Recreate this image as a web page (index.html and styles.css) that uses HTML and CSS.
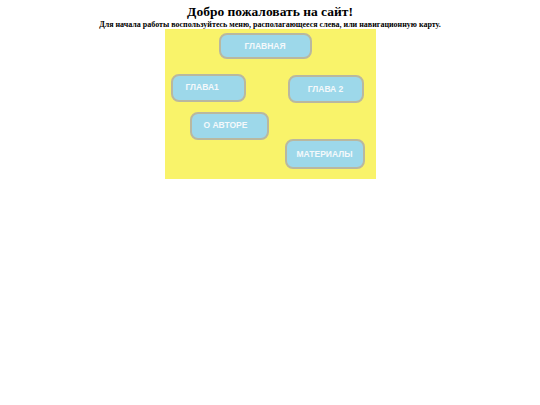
FILE: index.html
```html
<!DOCTYPE html>
<html lang="ru">
<head>
<meta charset="utf-8">
<title>Добро пожаловать</title>
<link rel="stylesheet" href="styles.css">
</head>
<body>
<h1 class="title">Добро пожаловать на сайт!</h1>
<p class="subtitle">Для начала работы воспользуйтесь меню, располагающееся слева, или навигационную карту.</p>
<div class="map">
  <a class="btn btn-main" href="#">ГЛАВНАЯ</a>
  <a class="btn btn-ch1" href="#">ГЛАВА1</a>
  <a class="btn btn-ch2" href="#">ГЛАВА 2</a>
  <a class="btn btn-author" href="#">О АВТОРЕ</a>
  <a class="btn btn-mat" href="#">МАТЕРИАЛЫ</a>
</div>
</body>
</html>
```
FILE: styles.css
```css
html, body {
  margin: 0;
  padding: 0;
  background: #ffffff;
}
body {
  font-family: "Liberation Serif", "Times New Roman", serif;
  color: #000;
  text-align: center;
  padding-top: 4px;
}
.title {
  font-size: 13.5px;
  font-weight: bold;
  line-height: 16px;
  margin: 0;
}
.subtitle {
  font-size: 8px;
  font-weight: bold;
  line-height: 9px;
  margin: 0;
}
.map {
  position: relative;
  width: 211px;
  height: 150px;
  margin: 0 auto;
  background: #f9f36a;
}
.btn {
  position: absolute;
  box-sizing: border-box;
  display: flex;
  align-items: center;
  justify-content: center;
  background: #9dd8ea;
  border: 2px solid #b9b8a0;
  border-radius: 8px;
  color: #f4f8fb;
  font-family: "Liberation Sans", Arial, sans-serif;
  font-weight: bold;
  font-size: 8.5px;
  text-decoration: none;
}
.btn-main { left: 54px; top: 4px; width: 93px; height: 26px; }
.btn-ch1 { left: 6px; top: 45px; width: 75px; height: 28px; justify-content: flex-start; padding-left: 13px; padding-bottom: 2px; }
.btn-ch2 { left: 123px; top: 46px; width: 76px; height: 28px; }
.btn-author { left: 25px; top: 83px; width: 79px; height: 28px; justify-content: flex-start; padding-left: 12px; padding-bottom: 2px; }
.btn-mat { left: 120px; top: 110px; width: 80px; height: 30px; }
```
